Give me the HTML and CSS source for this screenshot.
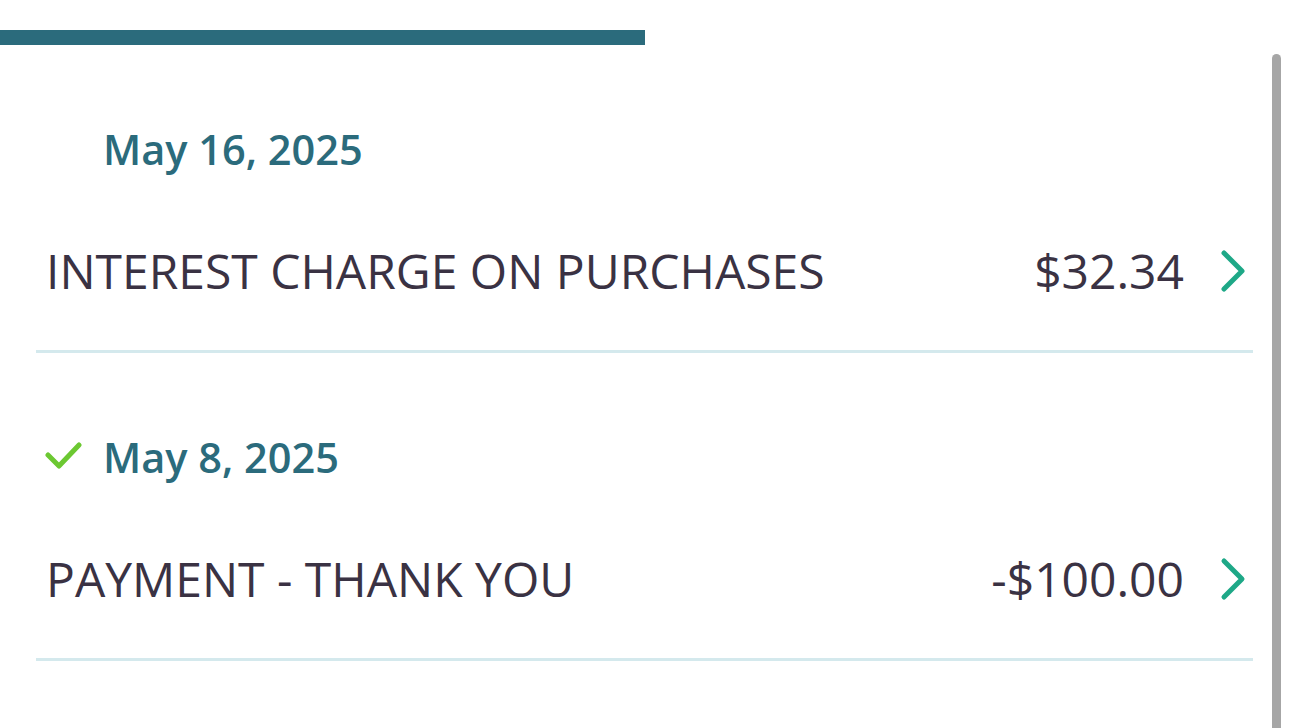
FILE: index.html
```html
<!DOCTYPE html>
<html>
<head>
<meta charset="utf-8">
<link rel="stylesheet" href="styles.css">
</head>
<body>
<div class="progress"></div>
<div class="list">
  <section class="group">
    <div class="date-row">
      <span class="status"></span>
      <span class="date">May 16, 2025</span>
    </div>
    <div class="txn">
      <span class="desc">INTEREST CHARGE ON PURCHASES</span>
      <span class="amount">$32.34</span>
      <svg class="chev" width="30" height="44" viewBox="0 0 30 44"><polyline points="6,4 24,22 6,40" fill="none" stroke="#1ea887" stroke-width="5" stroke-linecap="round" stroke-linejoin="round"/></svg>
    </div>
  </section>
  <section class="group">
    <div class="date-row">
      <span class="status"><svg width="38" height="30" viewBox="0 0 38 30"><polyline points="3,14 14,25 34,4" fill="none" stroke="#6cc832" stroke-width="5" stroke-linecap="round" stroke-linejoin="round"/></svg></span>
      <span class="date">May 8, 2025</span>
    </div>
    <div class="txn">
      <span class="desc">PAYMENT - THANK YOU</span>
      <span class="amount">-$100.00</span>
      <svg class="chev" width="30" height="44" viewBox="0 0 30 44"><polyline points="6,4 24,22 6,40" fill="none" stroke="#1ea887" stroke-width="5" stroke-linecap="round" stroke-linejoin="round"/></svg>
    </div>
  </section>
</div>
<div class="scrollbar"></div>
</body>
</html>
```

FILE: styles.css
```css
html, body {
  margin: 0;
  padding: 0;
  background: #ffffff;
  font-family: "Open Sans", "Noto Sans", sans-serif;
  overflow: hidden;
}

.progress {
  margin-top: 30px;
  width: 645px;
  height: 15px;
  background: #2b6b7c;
}

.list {
  margin-left: 36px;
  width: 1217px;
}

.group {
  margin-top: 74px;
  padding-bottom: 47px;
  border-bottom: 3px solid #d4e9ed;
}

.date-row {
  display: flex;
  align-items: center;
  height: 60px;
}

.status {
  width: 67px;
  display: flex;
  align-items: center;
  padding-left: 9px;
  box-sizing: border-box;
}

.status svg {
  display: block;
  margin-top: -3px;
}

.date {
  font-size: 41.5px;
  line-height: 60px;
  font-weight: 600;
  color: #2b6b7c;
}

.txn {
  margin-top: 60px;
  display: flex;
  align-items: center;
  height: 64px;
  padding-left: 10px;
  padding-right: 5px;
}

.desc {
  flex: 1;
  font-size: 48px;
  line-height: 64px;
  color: #3a3243;
}

.amount {
  font-size: 48px;
  line-height: 64px;
  color: #3a3243;
}

.chev {
  display: block;
  margin-left: 34px;
}

.scrollbar {
  position: fixed;
  left: 1272px;
  top: 54px;
  width: 9px;
  bottom: 0;
  background: #a6a6a6;
  border-radius: 5px 5px 0 0;
}
```
